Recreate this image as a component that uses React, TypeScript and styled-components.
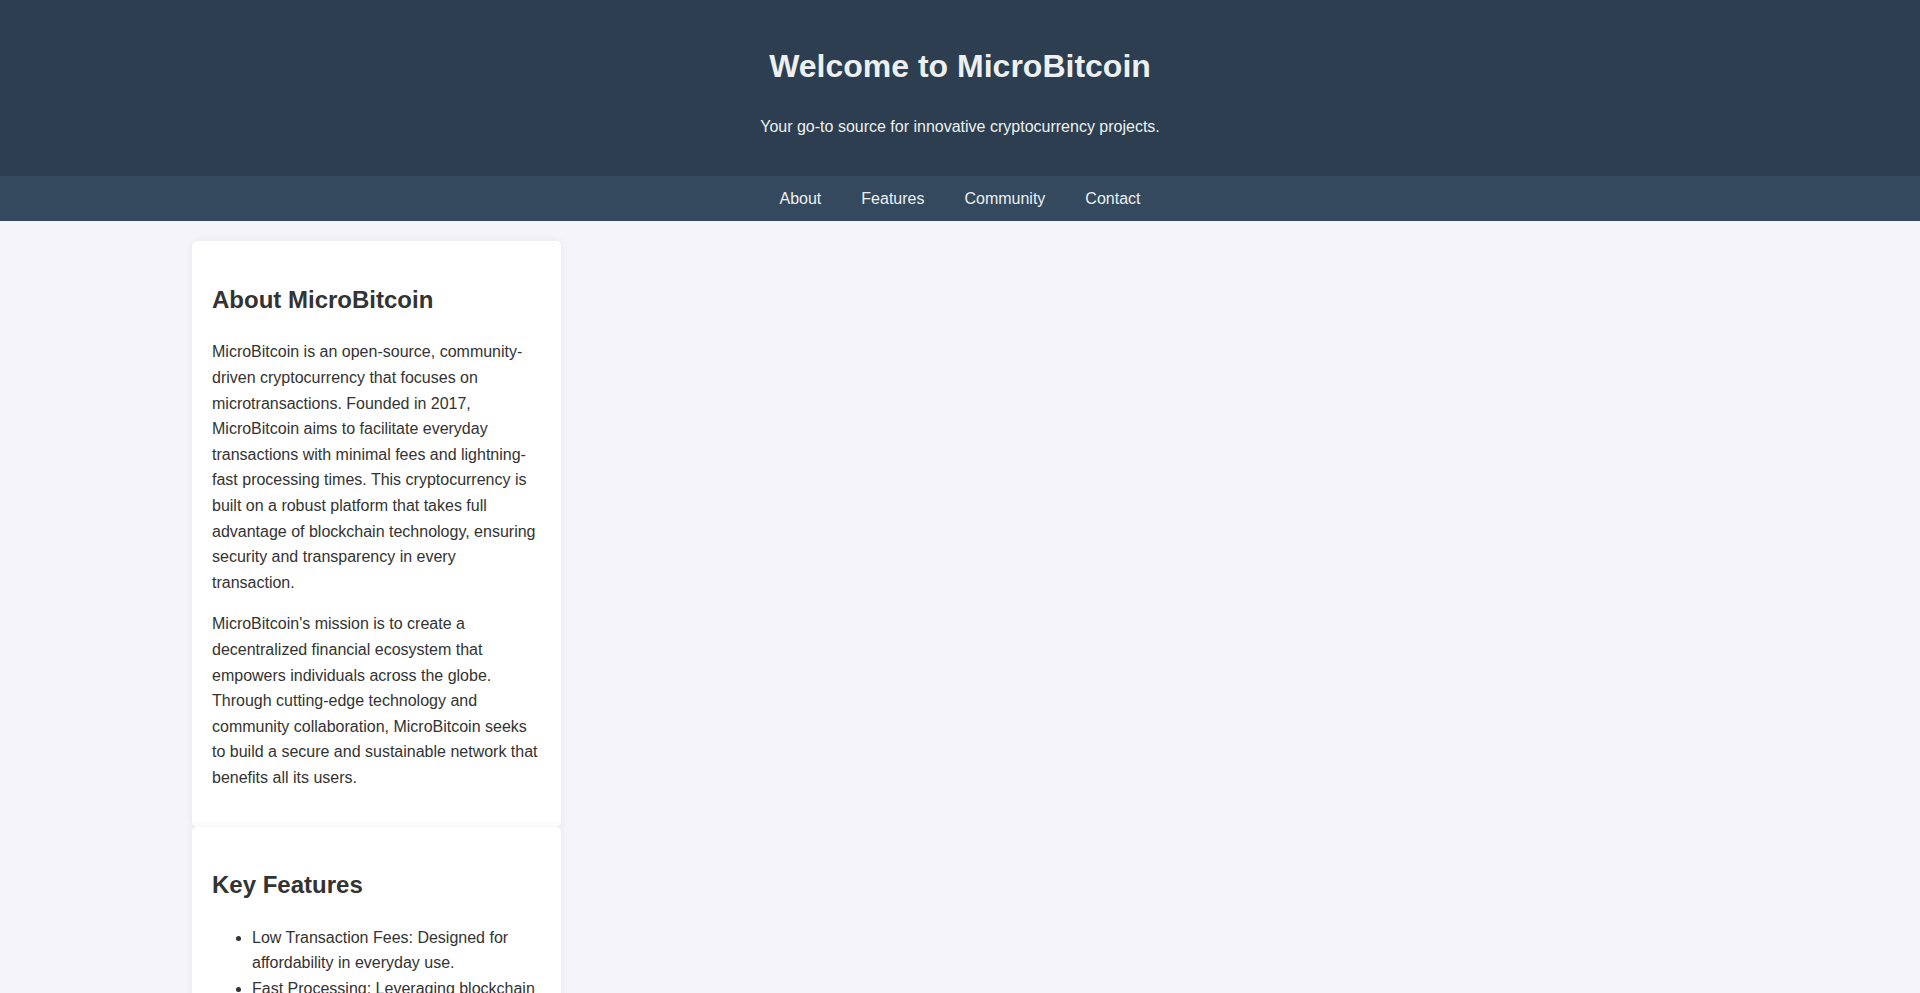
import React from 'react';
import styled, { createGlobalStyle } from 'styled-components';

const GlobalStyle = createGlobalStyle`
  body {
    margin: 0;
    padding: 0;
    font-family: 'Liberation Sans', Arial, sans-serif;
    line-height: 1.6;
    background-color: #f4f4f9;
    color: #333;
  }
`;

const Header = styled.header`
  background-color: #2c3e50;
  color: #ecf0f1;
  padding: 20px 0;
  text-align: center;

  h1 {
    font-size: 2em;
    margin: 0.67em 0;
  }

  p {
    margin: 1em 0;
  }
`;

const Nav = styled.nav`
  background-color: #34495e;
  display: flex;
  justify-content: center;
  gap: 40px;
  padding: 10px 0;

  a {
    color: #ecf0f1;
    text-decoration: none;
  }
`;

const Main = styled.main`
  width: 80%;
  margin: 0 auto;
  padding: 20px 0;
  display: grid;
  grid-template-columns: repeat(auto-fill, minmax(350px, 1fr));
  column-gap: 20px;
  align-items: start;
`;

const Column = styled.div`
  display: flex;
  flex-direction: column;
`;

const Card = styled.section`
  background: #fff;
  padding: 20px;
  border-radius: 5px;
  box-shadow: 0 0 10px rgba(0, 0, 0, 0.06);

  h2 {
    font-size: 1.5em;
    margin: 0.83em 0;
  }

  p {
    margin: 1em 0;
  }

  ul {
    padding-left: 40px;
    margin: 1em 0;
  }
`;

const features = [
  'Low Transaction Fees: Designed for affordability in everyday use.',
  'Fast Processing: Leveraging blockchain technology for quick confirmations.',
  'Secure Network: Built with robust cryptography to protect every user.',
  'Community Driven: Development guided by an open, global community.',
];

const App: React.FC = () => (
  <>
    <GlobalStyle />
    <Header>
      <h1>Welcome to MicroBitcoin</h1>
      <p>Your go-to source for innovative cryptocurrency projects.</p>
    </Header>
    <Nav>
      <a href="#about">About</a>
      <a href="#features">Features</a>
      <a href="#community">Community</a>
      <a href="#contact">Contact</a>
    </Nav>
    <Main>
      <Column>
        <Card id="about">
          <h2>About MicroBitcoin</h2>
          <p>
            MicroBitcoin is an open-source, community-driven cryptocurrency that focuses on
            microtransactions. Founded in 2017, MicroBitcoin aims to facilitate everyday
            transactions with minimal fees and lightning-fast processing times. This
            cryptocurrency is built on a robust platform that takes full advantage of blockchain
            technology, ensuring security and transparency in every transaction.
          </p>
          <p>
            MicroBitcoin's mission is to create a decentralized financial ecosystem that empowers
            individuals across the globe. Through cutting-edge technology and community
            collaboration, MicroBitcoin seeks to build a secure and sustainable network that
            benefits all its users.
          </p>
        </Card>
        <Card id="features">
          <h2>Key Features</h2>
          <ul>
            {features.map((f) => (
              <li key={f}>{f}</li>
            ))}
          </ul>
        </Card>
      </Column>
    </Main>
  </>
);

export default App;
